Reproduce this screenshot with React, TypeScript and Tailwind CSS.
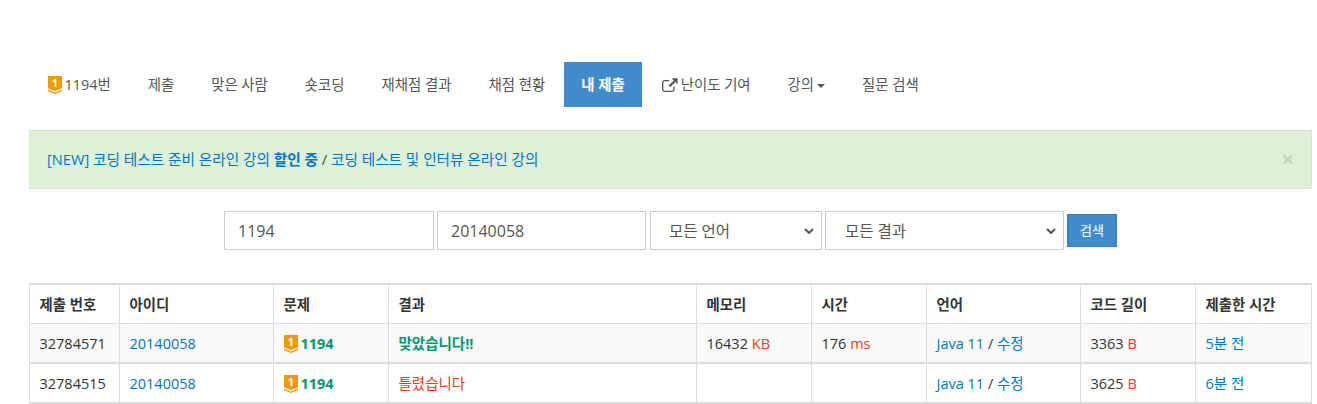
const FONT = "font-['Open_Sans','Noto_Sans_CJK_KR',sans-serif]";

function Badge({ className = "" }: { className?: string }) {
  return (
    <svg viewBox="0 0 14 18" className={className} aria-hidden="true">
      <path d="M0 0H14V12.2L7 15 0 12.2Z" fill="#ec9a05" />
      <path d="M0 13.6 7 16.4 14 13.6V15L7 18 0 15Z" fill="#ec9a05" />
      <text x="7" y="10.8" textAnchor="middle" fontSize="11" fontWeight="700" fill="#fff" fontFamily="Open Sans, sans-serif">1</text>
    </svg>
  );
}

function Tab({ children, active = false }: { children: React.ReactNode; active?: boolean }) {
  return (
    <a
      className={
        "flex h-[45px] items-center whitespace-nowrap text-[14.4px] " +
        (active ? "bg-[#428bca] px-[17.5px] font-bold text-white" : "px-[18.5px] text-[#555]")
      }
    >
      {children}
    </a>
  );
}

function Select({ label, w, pl }: { label: string; w: string; pl: string }) {
  return (
    <div className={"relative h-[39px] " + w}>
      <select className={"h-full w-full appearance-none border border-[#ccc] bg-white pt-[3px] text-[15.5px] text-[#555] " + pl}>
        <option>{label}</option>
      </select>
      <svg viewBox="0 0 10 6" className="pointer-events-none absolute top-[17px] right-[8px] h-[6px] w-[10px]" aria-hidden="true">
        <path d="M1 1 5 5l4-4" fill="none" stroke="#555" strokeWidth="2" />
      </svg>
    </div>
  );
}

const cols = ["w-[90px]", "w-[154px]", "w-[115px]", "w-[308px]", "w-[115px]", "w-[115px]", "w-[154px]", "w-[115px]", "w-[116px]"];
const heads = ["제출 번호", "아이디", "문제", "결과", "메모리", "시간", "언어", "코드 길이", "제출한 시간"];

const Td = ({ children, className = "" }: { children?: React.ReactNode; className?: string }) => (
  <td className={"h-[40px] border-x border-b-2 border-x-[#ddd] border-b-[#ddd] px-[9.5px] pt-[2px] pb-0 align-middle whitespace-nowrap " + className}>{children}</td>
);

function Row({ id, result, ok, mem, time, len, ago, striped }: {
  id: string; result: string; ok: boolean; mem?: string; time?: string; len: string; ago: string; striped?: boolean;
}) {
  return (
    <tr className={striped ? "bg-[#f9f9f9]" : "bg-white"}>
      <Td>{id}</Td>
      <Td><a className="text-[#0076c0]">20140058</a></Td>
      <Td>
        <span className="flex items-center gap-[3px]">
          <Badge className="h-[18px] w-[14px]" />
          <a className="font-bold text-[#009874]">1194</a>
        </span>
      </Td>
      <Td className={ok ? "font-bold text-[#009874]" : "text-[#dd4124]"}>{result}</Td>
      <Td>{mem && <>{mem} <span className="text-[#dd4124]">KB</span></>}</Td>
      <Td>{time && <>{time} <span className="text-[#dd4124]">ms</span></>}</Td>
      <Td><a className="text-[#0076c0]">Java 11</a> / <a className="text-[#0076c0]">수정</a></Td>
      <Td>{len} <span className="text-[#dd4124]">B</span></Td>
      <Td><a className="text-[#0076c0]">{ago}</a></Td>
    </tr>
  );
}

export default function App() {
  return (
    <div className={FONT + " h-[404px] w-[1317px] overflow-hidden bg-white pt-[62px] pl-[29px] text-[#333]"}>
      <div className="w-[1283px]">
        <nav className="flex">
          <Tab><Badge className="mr-[3px] h-[18px] w-[14px]" />1194번</Tab>
          <Tab>제출</Tab>
          <Tab>맞은 사람</Tab>
          <Tab>숏코딩</Tab>
          <Tab>재채점 결과</Tab>
          <Tab>채점 현황</Tab>
          <Tab active>내 제출</Tab>
          <Tab>
            <svg viewBox="0 0 16 14" className="mr-[3px] ml-[1px] h-[14px] w-[16px]" aria-hidden="true">
              <path d="M12 8.5v2.7A2.1 2.1 0 0 1 9.9 13.3H2.8A2.1 2.1 0 0 1 .7 11.2V4.8A2.1 2.1 0 0 1 2.8 2.7H7" fill="none" stroke="#555" strokeWidth="1.3" />
              <path d="M9.6.2H15.6V6.2L13.4 4 8.2 9.2 6.6 7.6 11.8 2.4Z" fill="#555" />
            </svg>
            난이도 기여
          </Tab>
          <Tab>
            강의
            <span className="mt-[2px] ml-[3px] border-x-[4px] border-t-[4px] border-x-transparent border-t-[#555]" />
          </Tab>
          <Tab>질문 검색</Tab>
        </nav>

        <div className="relative mt-[23px] flex h-[59px] items-center border border-[#d6e9c6] bg-[#dff0d8] pl-[17px] text-[14.65px] text-[#3c763d]">
          <span className="text-[#0076c0]">[NEW] 코딩 테스트 준비 온라인 강의 <b className="font-bold">할인 중</b></span>
          <span className="text-[#2b542c]">&nbsp;/&nbsp;</span>
          <span className="text-[#0076c0]">코딩 테스트 및 인터뷰 온라인 강의</span>
          <span className="absolute top-[16px] right-[17px] text-[22px] leading-none font-bold text-[#3c763d] opacity-20">×</span>
        </div>

        <form className="mt-[22px] flex items-center pl-[195px]">
          <input readOnly value="1194" className="h-[39px] w-[210px] border border-[#ccc] px-[13px] text-[16px] text-[#555]" />
          <input readOnly value="20140058" className="ml-[3px] h-[39px] w-[209px] border border-[#ccc] px-[13px] text-[16px] text-[#555]" />
          <div className="ml-[4px]"><Select label="모든 언어" w="w-[172px]" pl="pl-[18px]" /></div>
          <div className="ml-[3px]"><Select label="모든 결과" w="w-[239px]" pl="pl-[19px]" /></div>
          <button type="button" className="ml-[3px] h-[33px] w-[50px] border border-[#357ebd] bg-[#428bca] text-[13px] text-white">검색</button>
        </form>

        <table className="mt-[33px] w-[1283px] table-fixed border-collapse border-t-2 border-[#ddd] text-[14.5px]">
          <colgroup>{cols.map((c, i) => <col key={i} className={c} />)}</colgroup>
          <thead>
            <tr>
              {heads.map((h) => (
                <th key={h} className="h-[39px] border-x border-b border-[#ddd] px-[9.5px] pt-[2px] pb-0 text-left text-[14.4px] font-bold whitespace-nowrap">{h}</th>
              ))}
            </tr>
          </thead>
          <tbody>
            <Row striped id="32784571" result="맞았습니다!!" ok mem="16432" time="176" len="3363" ago="5분 전" />
            <Row id="32784515" result="틀렸습니다" ok={false} len="3625" ago="6분 전" />
          </tbody>
        </table>
      </div>
    </div>
  );
}
